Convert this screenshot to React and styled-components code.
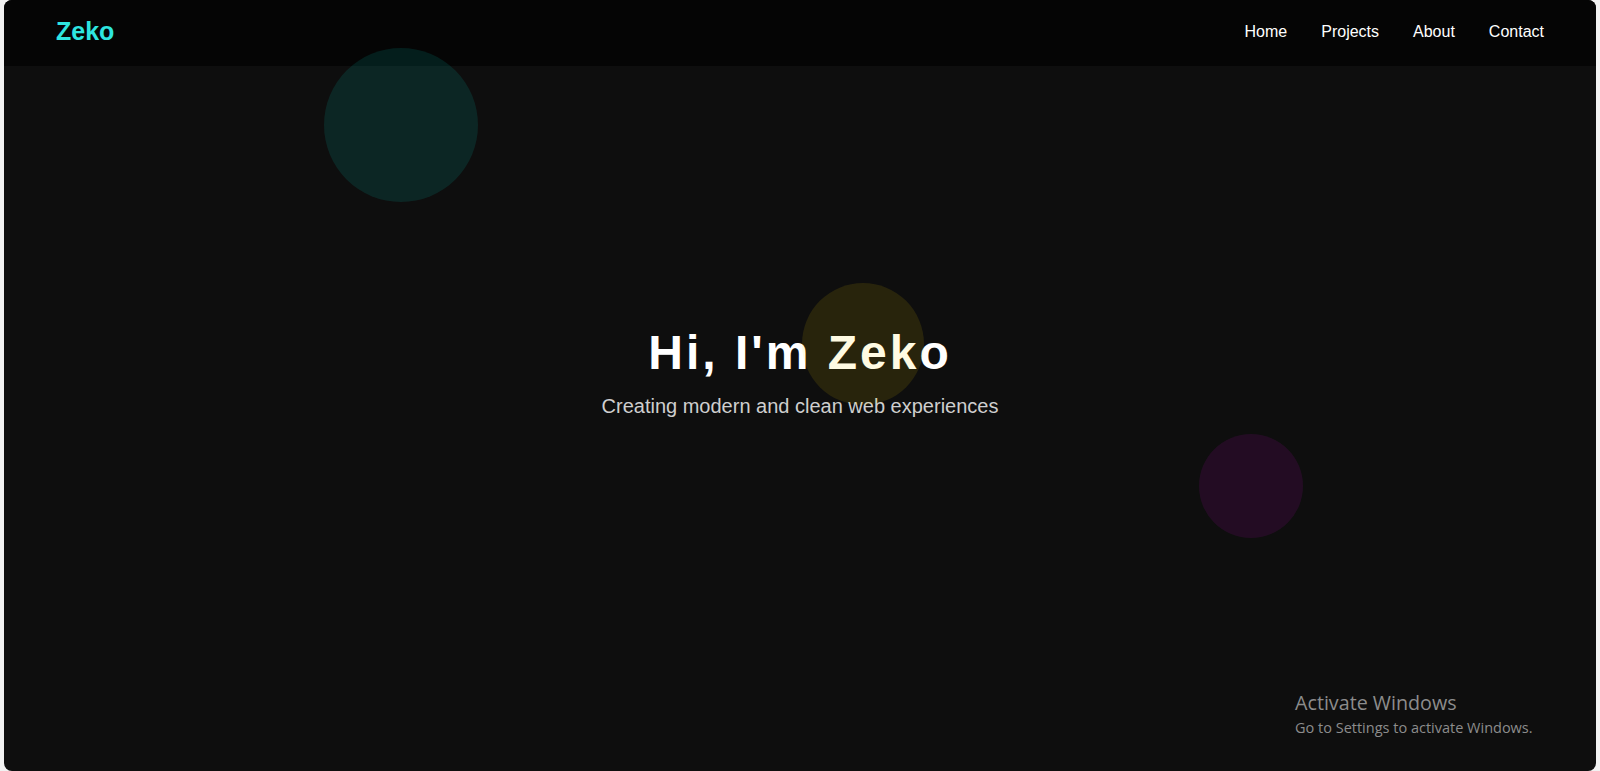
import React from "react";
import styled, { createGlobalStyle } from "styled-components";

const GlobalStyle = createGlobalStyle`
  html, body {
    margin: 0;
    padding: 0;
    height: 100%;
    background: #f2f2f2;
  }
  #root {
    height: 100%;
  }
  * {
    box-sizing: border-box;
  }
`;

const shapes = [
  { size: 154, x: 320, y: 48, color: "rgba(0, 255, 235, 0.1)" },
  { size: 122, x: 798, y: 283, color: "rgba(255, 215, 0, 0.11)" },
  { size: 104, x: 1195, y: 434, color: "rgba(255, 0, 255, 0.09)" },
];

const App = () => {
  return (
    <>
      <GlobalStyle />
      <Window>
        <Header>
          <Logo>Zeko</Logo>
          <Nav>
            <a>Home</a>
            <a>Projects</a>
            <a>About</a>
            <a>Contact</a>
          </Nav>
        </Header>
        <Hero>
          <h1>Hi, I'm Zeko</h1>
          <p>Creating modern and clean web experiences</p>
        </Hero>
        {shapes.map((s, i) => (
          <Shape
            key={i}
            $color={s.color}
            style={{ width: s.size, height: s.size, left: s.x, top: s.y }}
          />
        ))}
        <Watermark>
          <strong>Activate Windows</strong>
          <span>Go to Settings to activate Windows.</span>
        </Watermark>
      </Window>
    </>
  );
};

const Window = styled.div`
  position: relative;
  display: flex;
  flex-direction: column;
  height: 100%;
  margin: 0 4px;
  border-radius: 8px;
  overflow: hidden;
  background: #0e0e0e;
  font-family: "Liberation Sans", Arial, sans-serif;
  color: #fff;
`;

const Header = styled.header`
  display: flex;
  align-items: center;
  justify-content: space-between;
  height: 66px;
  padding: 0 52px 0 52px;
  background: #050505;
  flex-shrink: 0;
`;

const Logo = styled.div`
  font-size: 25px;
  font-weight: 700;
  color: #2ee6e0;
  margin-top: -3px;
`;

const Nav = styled.nav`
  display: flex;
  gap: 34px;
  margin-top: -2px;

  a {
    color: #fff;
    font-size: 16px;
    cursor: pointer;
  }
`;

const Hero = styled.section`
  flex: 1;
  display: flex;
  flex-direction: column;
  align-items: center;
  justify-content: center;
  padding-bottom: 94px;
  text-align: center;

  h1 {
    margin: 0 0 15px;
    font-size: 48px;
    font-weight: 700;
    letter-spacing: 3px;
    line-height: 1.15;
  }

  p {
    margin: 0;
    font-size: 20px;
    color: #cfcfcf;
    line-height: 1.15;
  }
`;

const Shape = styled.div`
  position: absolute;
  border-radius: 50%;
  background: ${(p) => p.$color};
  pointer-events: none;
`;

const Watermark = styled.div`
  position: absolute;
  left: 1291px;
  bottom: 34px;
  display: flex;
  flex-direction: column;
  gap: 2px;
  white-space: nowrap;
  font-family: "Open Sans", "Noto Sans", sans-serif;
  color: #8c8c8c;

  strong {
    font-weight: 400;
    font-size: 19.7px;
  }

  span {
    font-size: 14.5px;
  }
`;

export default App;
